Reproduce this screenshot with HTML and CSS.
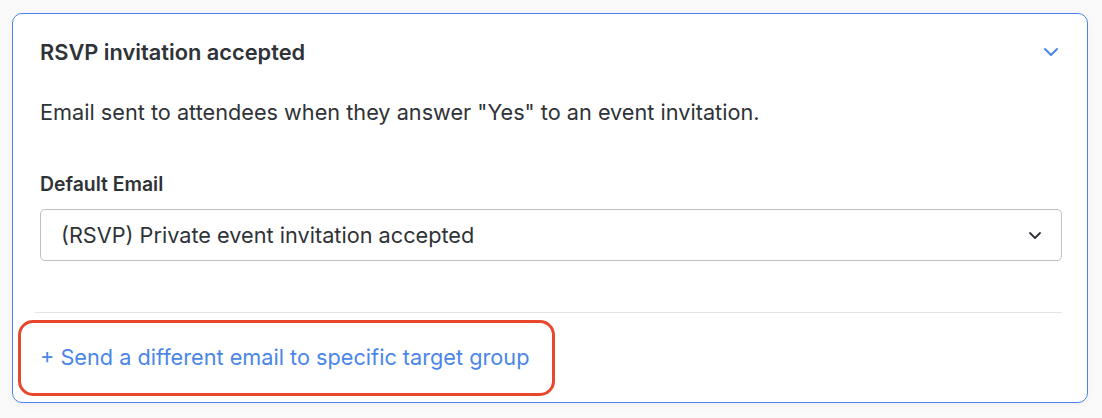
FILE: index.html
```html
<!DOCTYPE html>
<html lang="en">
<head>
  <meta charset="UTF-8" />
  <meta name="viewport" content="width=device-width, initial-scale=1.0" />
  <title>RSVP invitation accepted</title>
  <link rel="stylesheet" href="styles.css">
</head>
<body>
  <section class="card">
    <header class="card-head">
      <h2>RSVP invitation accepted</h2>
      <svg class="chevron" width="16" height="10" viewBox="0 0 16 10"><path d="M2 2l6 6 6-6" fill="none" stroke="#4a86e8" stroke-width="2" stroke-linecap="round" stroke-linejoin="round"/></svg>
    </header>

    <p class="desc">Email sent to attendees when they answer "Yes" to an event invitation.</p>

    <label class="field-label">Default Email</label>
    <div class="select">
      <span>(RSVP) Private event invitation accepted</span>
      <svg width="14" height="9" viewBox="0 0 14 9"><path d="M2 2l5 5 5-5" fill="none" stroke="#2f3337" stroke-width="1.8" stroke-linecap="round" stroke-linejoin="round"/></svg>
    </div>

    <div class="card-foot">
      <a class="add-link" href="#">+ Send a different email to specific target group</a>
      <div class="highlight"></div>
    </div>
  </section>
</body>
</html>
```

FILE: styles.css
```css
body {
  margin: 0;
  padding: 13px 14px 16px 12px;
  background: #fafafa;
  font-family: Inter, "Noto Sans", sans-serif;
  color: #2f3337;
}
.card {
  background: #fff;
  border: 1px solid #4a86e8;
  border-radius: 10px;
  padding: 0 25px 0 27px;
  box-shadow: 0 2px 8px rgba(0, 0, 0, 0.04);
}
.card-head {
  display: flex;
  justify-content: space-between;
  align-items: center;
  height: 76px;
}
.card-head h2 {
  margin: 0;
  font-size: 21.8px;
  font-weight: 600;
}
.chevron {
  margin-right: 3px;
}
.desc {
  margin: 0;
  padding: 8px 0 0;
  font-size: 21.7px;
  line-height: 28px;
  height: 52px;
}
.field-label {
  display: block;
  margin-top: 23px;
  font-size: 19.4px;
  font-weight: 600;
  line-height: 22px;
}
.select {
  display: flex;
  justify-content: space-between;
  align-items: center;
  margin-top: 14px;
  height: 50px;
  border: 1px solid #bcbfc3;
  border-radius: 5px;
  padding: 0 19px 0 20px;
  font-size: 21.7px;
}
.card-foot {
  position: relative;
  margin: 51px 0 0 -5px;
  border-top: 1px solid #e4e4e4;
  padding: 30px 0 31px 5px;
}
.add-link {
  color: #4a86e8;
  text-decoration: none;
  font-size: 21.7px;
  line-height: 28px;
}
.highlight {
  position: absolute;
  left: -17px;
  top: 7px;
  width: 531px;
  height: 70px;
  border: 3px solid #e8472b;
  border-radius: 15px;
}
```
